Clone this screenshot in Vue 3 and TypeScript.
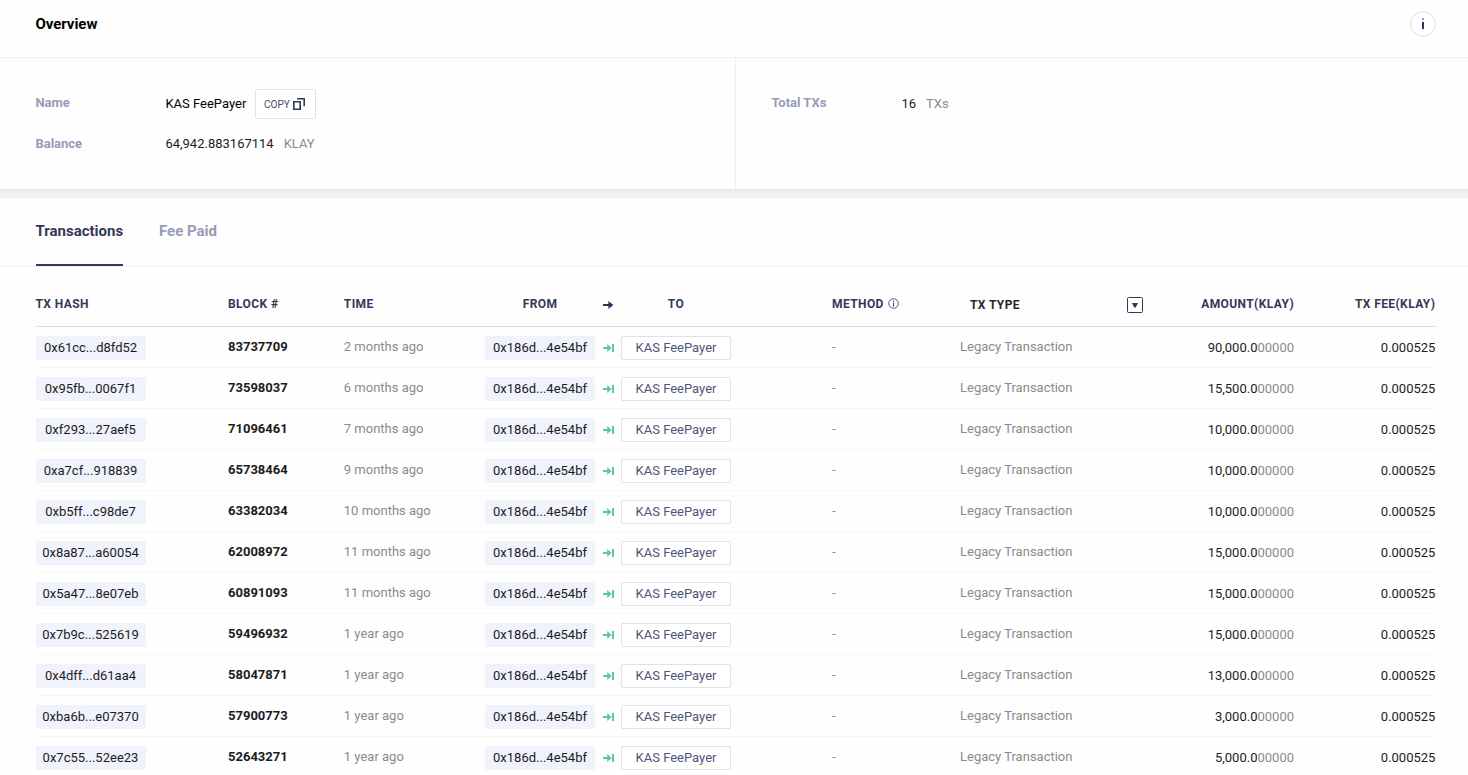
<script setup lang="ts">
interface Transaction {
  hash: string
  block: string
  time: string
  amount: string
}

const rows: Transaction[] = [
  { hash: '0x61cc...d8fd52', block: '83737709', time: '2 months ago', amount: '90,000.0' },
  { hash: '0x95fb...0067f1', block: '73598037', time: '6 months ago', amount: '15,500.0' },
  { hash: '0xf293...27aef5', block: '71096461', time: '7 months ago', amount: '10,000.0' },
  { hash: '0xa7cf...918839', block: '65738464', time: '9 months ago', amount: '10,000.0' },
  { hash: '0xb5ff...c98de7', block: '63382034', time: '10 months ago', amount: '10,000.0' },
  { hash: '0x8a87...a60054', block: '62008972', time: '11 months ago', amount: '15,000.0' },
  { hash: '0x5a47...8e07eb', block: '60891093', time: '11 months ago', amount: '15,000.0' },
  { hash: '0x7b9c...525619', block: '59496932', time: '1 year ago', amount: '15,000.0' },
  { hash: '0x4dff...d61aa4', block: '58047871', time: '1 year ago', amount: '13,000.0' },
  { hash: '0xba6b...e07370', block: '57900773', time: '1 year ago', amount: '3,000.0' },
  { hash: '0x7c55...52ee23', block: '52643271', time: '1 year ago', amount: '5,000.0' },
]
</script>

<template>
  <div class="page">
    <section class="overview">
      <header class="overview-head">
        <h2>Overview</h2>
        <button class="info" aria-label="Information">
          <svg width="26" height="26" viewBox="0 0 26 26">
            <circle cx="13" cy="13" r="12.4" fill="#fff" stroke="#dcdde8" />
            <rect x="12" y="7" width="2" height="2" fill="#9496ae" />
            <rect x="12" y="11" width="2" height="7" fill="#2f3259" />
          </svg>
        </button>
      </header>
      <div class="overview-body">
        <div class="pane">
          <div class="field">
            <span class="label">Name</span>
            <span class="value name">KAS FeePayer</span>
            <button class="copy">
              <span>COPY</span>
              <svg width="12" height="12" viewBox="0 0 12 12" fill="none" stroke="#343858" stroke-width="1.6">
                <path d="M.8 3.8h6.4v7.4H.8zM4 .8h7.2v7.4" />
              </svg>
            </button>
          </div>
          <div class="field">
            <span class="label low">Balance</span>
            <span class="value">64,942.883167114</span>
            <span class="unit">KLAY</span>
          </div>
        </div>
        <div class="pane right">
          <div class="field">
            <span class="label">Total TXs</span>
            <span class="value">16</span>
            <span class="unit">TXs</span>
          </div>
        </div>
      </div>
    </section>

    <div class="band"></div>

    <nav class="tabs">
      <a class="tab active">Transactions</a>
      <a class="tab">Fee Paid</a>
    </nav>

    <div class="table">
      <div class="row head">
        <span class="first">TX HASH</span>
        <span>BLOCK #</span>
        <span class="time">TIME</span>
        <span class="center">FROM</span>
        <span class="arrow">
          <svg width="11" height="8" viewBox="0 0 11 8">
            <path d="M0 2.9h5.4V0L10.3 4 5.4 8V5.1H0z" fill="#2f3359" />
          </svg>
        </span>
        <span class="center to">TO</span>
        <span class="method">METHOD
          <svg width="11" height="11" viewBox="0 0 11 11" fill="none">
            <circle cx="5.5" cy="5.5" r="4.8" stroke="#454967" stroke-width=".9" />
            <path d="M5.5 2.5v1.2M5.5 4.5v4" stroke="#343858" stroke-width="1" />
          </svg>
        </span>
        <span class="type">TX TYPE
          <svg width="16" height="16" viewBox="0 0 16 16">
            <rect x=".5" y=".5" width="15" height="15" rx="1" fill="none" stroke="#343858" />
            <path d="M5 6h6L8.7 10.4H7.3z" fill="#343858" />
          </svg>
        </span>
        <span class="num">AMOUNT(KLAY)</span>
        <span class="num fee">TX FEE(KLAY)</span>
      </div>
      <div v-for="row in rows" :key="row.hash" class="row">
        <span class="chip hash">{{ row.hash }}</span>
        <span class="block">{{ row.block }}</span>
        <span class="muted time">{{ row.time }}</span>
        <span class="chip">0x186d...4e54bf</span>
        <span class="arrow">
          <svg width="11" height="8" viewBox="0 0 11 8" fill="#59c7ab">
            <path d="M0 2.9h4.2V0L8.6 4 4.2 8V5.1H0z" />
            <rect x="9" width="2" height="8" />
          </svg>
        </span>
        <span class="chip outlined">KAS FeePayer</span>
        <span class="muted method">-</span>
        <span class="muted">Legacy Transaction</span>
        <span class="num">{{ row.amount }}<i>00000</i></span>
        <span class="num fee">0.000525</span>
      </div>
    </div>
  </div>
</template>

<style>
body {
  overflow: hidden;
  background: #fff;
}
</style>

<style scoped>
.page {
  height: 775px;
  overflow: hidden;
  background: #fefefe;
  color: #1c1c1c;
  font: 13px/20px Roboto, sans-serif;
}
button {
  font-family: inherit;
  margin: 0;
  background: #fff;
}
.overview {
  height: 189px;
}
.overview-head {
  display: flex;
  justify-content: space-between;
  box-sizing: border-box;
  height: 58px;
  padding: 11px 32px 0 35.4px;
  border-bottom: 1px solid #f0f0f1;
}
h2 {
  margin: 0;
  color: #000;
  font-size: 15px;
  line-height: 26px;
  font-weight: 700;
  letter-spacing: -0.03px;
}
.info {
  width: 26px;
  height: 26px;
  padding: 0;
  border: 0;
}
.info svg {
  display: block;
}
.overview-body {
  display: flex;
  height: 131px;
}
.pane {
  box-sizing: border-box;
  width: 735px;
  padding: 31px 36px 0 35.4px;
}
.pane.right {
  width: 733px;
  border-left: 1px solid #f0f0f1;
}
.field {
  display: flex;
  height: 30px;
  margin-bottom: 10px;
  line-height: 30px;
}
.label {
  width: 130px;
  color: #989bb5;
  font-weight: 700;
  line-height: 28px;
}
.label.low {
  line-height: 30px;
}
.value {
  color: #1c1c1c;
}
.name {
  color: #000;
}
.unit {
  margin-left: 10px;
  color: #8b8b8b;
}
.copy {
  display: flex;
  align-items: center;
  justify-content: center;
  gap: 3px;
  box-sizing: border-box;
  width: 61px;
  height: 30px;
  margin-left: 8.6px;
  padding: 0 2px 0 0;
  border: 1px solid #dfe0eb;
  border-radius: 2px;
  color: #464a6e;
  font-size: 10px;
}
.band {
  height: 10px;
  background: linear-gradient(#e7e9ed, #f0f2f6 60%, #f2f4f8);
}
.tabs {
  display: flex;
  gap: 36px;
  box-sizing: border-box;
  height: 68px;
  padding-left: 36px;
  border-bottom: 1px solid #f2f2f3;
}
.tab {
  box-sizing: border-box;
  height: 67px;
  color: #989bb5;
  font-size: 15px;
  font-weight: 700;
  line-height: 64px;
}
.tab.active {
  width: 87px;
  color: #343858;
  text-indent: -0.5px;
  border-bottom: 2px solid #343858;
}
.table {
  margin: 0 32px 0 36px;
}
.row {
  display: grid;
  grid-template-columns: 192px 116px 141px 110px 26px 211px 128px 128px 206px 1fr;
  align-items: center;
  height: 40px;
  border-bottom: 1px solid #f6f6f7;
}
.head {
  height: 59px;
  border-color: #dcdde8;
  color: #343858;
  font-size: 12px;
  font-weight: 700;
  letter-spacing: 0.4px;
}
.head > span {
  padding-bottom: 14px;
  margin-top: 29px;
  height: 16px;
  line-height: 16px;
}
.first {
  text-indent: -0.5px;
}
.time {
  text-indent: -0.2px;
}
.center {
  text-align: center;
}
.to {
  width: 110px;
}
.chip {
  box-sizing: border-box;
  width: 110px;
  height: 24px;
  margin-top: 2px;
  border-radius: 2px;
  background: #f0f2fc;
  text-align: center;
  line-height: 24px;
}
.hash {
  text-indent: -1px;
}
.outlined {
  border: 1px solid #dfe0eb;
  background: #fff;
  color: #50547a;
  line-height: 22px;
}
.block {
  font-weight: 700;
}
.arrow {
  padding-left: 8px;
  line-height: 0;
}
.arrow svg {
  display: block;
  margin-top: 2px;
}
.head .arrow svg {
  margin-top: 5px;
}
.muted {
  color: #8b8b8b;
}
.head .type {
  display: flex;
  justify-content: space-between;
  align-items: flex-start;
  width: 173px;
  margin-left: 10px;
  color: #282828;
  line-height: 18px;
}
.head .type svg {
  margin-top: 1px;
}
.head .method {
  display: flex;
  gap: 5px;
}
.head .method svg {
  margin: 2px 0 0 -0.5px;
}
.row .num {
  text-align: right;
}
.row:not(.head) .num {
  margin-top: 2px;
}
.num.fee {
  padding-right: 0.6px;
}
.num i {
  color: #8b8b8b;
  font-style: normal;
}
</style>
